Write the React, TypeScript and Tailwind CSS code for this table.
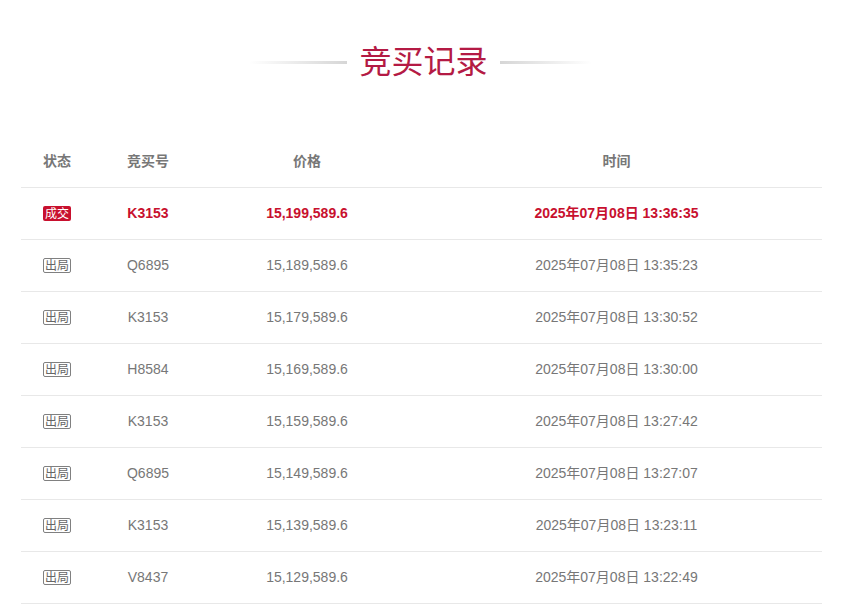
import React from "react";

const rows = [
  { win: true, no: "K3153", price: "15,199,589.6", time: "2025年07月08日 13:36:35" },
  { win: false, no: "Q6895", price: "15,189,589.6", time: "2025年07月08日 13:35:23" },
  { win: false, no: "K3153", price: "15,179,589.6", time: "2025年07月08日 13:30:52" },
  { win: false, no: "H8584", price: "15,169,589.6", time: "2025年07月08日 13:30:00" },
  { win: false, no: "K3153", price: "15,159,589.6", time: "2025年07月08日 13:27:42" },
  { win: false, no: "Q6895", price: "15,149,589.6", time: "2025年07月08日 13:27:07" },
  { win: false, no: "K3153", price: "15,139,589.6", time: "2025年07月08日 13:23:11" },
  { win: false, no: "V8437", price: "15,129,589.6", time: "2025年07月08日 13:22:49" },
];

export default function App() {
  return (
    <div
      className="w-[841px] h-[605px] bg-white overflow-hidden pl-[21px] pr-[19px]"
      style={{ fontFamily: '"Liberation Sans", Arial, "Noto Sans CJK SC", sans-serif' }}
    >
      <div className="mt-[40px] h-[44px] flex items-center justify-center gap-[12px] pr-[2px]">
        <div className="w-[98px] h-[3px] bg-gradient-to-r from-white to-[#d6d6d6]" />
        <div className="text-[32px] leading-[44px] text-[#b41a44]">竞买记录</div>
        <div className="w-[92px] h-[3px] bg-gradient-to-r from-[#d6d6d6] to-white" />
      </div>
      <div className="mt-[51px]">
        <div className="grid grid-cols-[72px_110px_208px_1fr] h-[53px] items-center border-b border-[#e8e8e8] text-[14px] font-bold text-[#777]">
          <div className="text-center">状态</div>
          <div className="text-center">竞买号</div>
          <div className="text-center">价格</div>
          <div className="text-center">时间</div>
        </div>
        {rows.map((r, i) => (
          <div
            key={i}
            className={
              "grid grid-cols-[72px_110px_208px_1fr] h-[52px] items-center border-b border-[#e8e8e8] text-[14px] " +
              (r.win ? "font-bold text-[#c8102e]" : "text-[#777]")
            }
          >
            <div className="flex justify-center">
              {r.win ? (
                <span className="inline-flex items-center justify-center w-[28px] h-[15px] rounded-[2px] bg-[#c8102e] text-white text-[12px] font-normal leading-none">
                  成交
                </span>
              ) : (
                <span className="inline-flex items-center justify-center w-[28px] h-[15px] rounded-[2px] border border-[#808080] text-[#666] text-[12px] leading-none">
                  出局
                </span>
              )}
            </div>
            <div className="text-center">{r.no}</div>
            <div className="text-center">{r.price}</div>
            <div className="text-center">{r.time}</div>
          </div>
        ))}
      </div>
    </div>
  );
}
